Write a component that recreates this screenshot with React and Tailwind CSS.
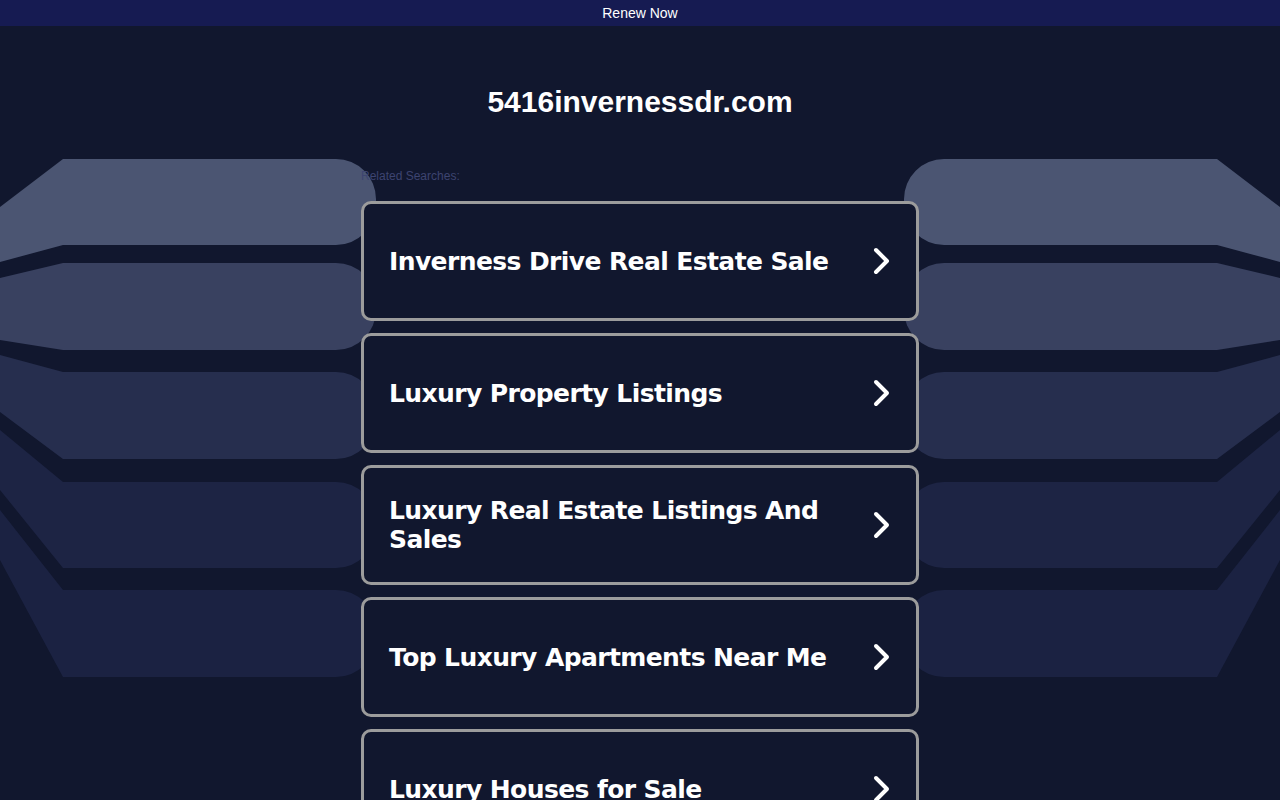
import React from 'react';

const SEARCHES = [
  'Inverness Drive Real Estate Sale',
  'Luxury Property Listings',
  'Luxury Real Estate Listings And Sales',
  'Top Luxury Apartments Near Me',
  'Luxury Houses for Sale',
];

// left-side bands: top, bottom, left edge top, left edge bottom, colour
const BANDS = [
  { t: 159, b: 245, lt: 207, lb: 262, fill: '#4b5572' },
  { t: 263, b: 350, lt: 278, lb: 340, fill: '#394160' },
  { t: 372, b: 459, lt: 355, lb: 412, fill: '#262e4e' },
  { t: 482, b: 568, lt: 430, lb: 490, fill: '#1d2444' },
  { t: 590, b: 677, lt: 510, lb: 560, fill: '#1b2242' },
];

function bandPath({ t, b, lt, lb }) {
  return `M0,${lt} L63,${t} H336 A40,40 0 0 1 376,${t + 40} V${b - 40} A40,40 0 0 1 336,${b} H63 L0,${lb} Z`;
}

function Backdrop() {
  const bands = BANDS.map((band, i) => (
    <path key={i} d={bandPath(band)} fill={band.fill} />
  ));
  return (
    <svg
      className="absolute left-0 top-0 pointer-events-none"
      width="1280"
      height="800"
      viewBox="0 0 1280 800"
    >
      <g>{bands}</g>
      <g transform="translate(1280,0) scale(-1,1)">{bands}</g>
    </svg>
  );
}

function Chevron() {
  return (
    <svg width="20" height="28" viewBox="0 0 20 28" className="shrink-0">
      <polyline
        points="4,3 15,14 4,25"
        fill="none"
        stroke="white"
        strokeWidth="4"
        strokeLinecap="round"
        strokeLinejoin="round"
      />
    </svg>
  );
}

export default function App() {
  return (
    <div className="relative min-h-screen overflow-hidden bg-[#11172e] font-['Liberation_Sans',Arial,sans-serif]">
      <div className="relative z-10 flex h-[26px] items-center justify-center bg-[#161b52] text-[14px] text-white">
        Renew Now
      </div>

      <div className="relative">
        <div className="absolute -top-[26px] left-0">
          <Backdrop />
        </div>

        <div className="relative flex flex-col items-center pt-[59px]">
          <h1 className="text-[30px] font-bold leading-[34px] text-white">5416invernessdr.com</h1>

          <div className="mt-[50px] w-[558px]">
            <p className="text-[12px] leading-[14px] text-[#3d4470]">Related Searches:</p>
            <div className="mt-[18px] flex flex-col gap-[12px]">
              {SEARCHES.map((s) => (
                <div
                  key={s}
                  className="flex h-[120px] items-center justify-between gap-6 rounded-[10px] border-[3px] border-[#9c9c9c] bg-[#11172e] pl-[25px] pr-[24px]"
                >
                  <span className="font-['DejaVu_Sans',Verdana,sans-serif] text-[25px] font-bold leading-[29px] tracking-[-0.6px] text-white">
                    {s}
                  </span>
                  <Chevron />
                </div>
              ))}
            </div>
          </div>
        </div>
      </div>
    </div>
  );
}
